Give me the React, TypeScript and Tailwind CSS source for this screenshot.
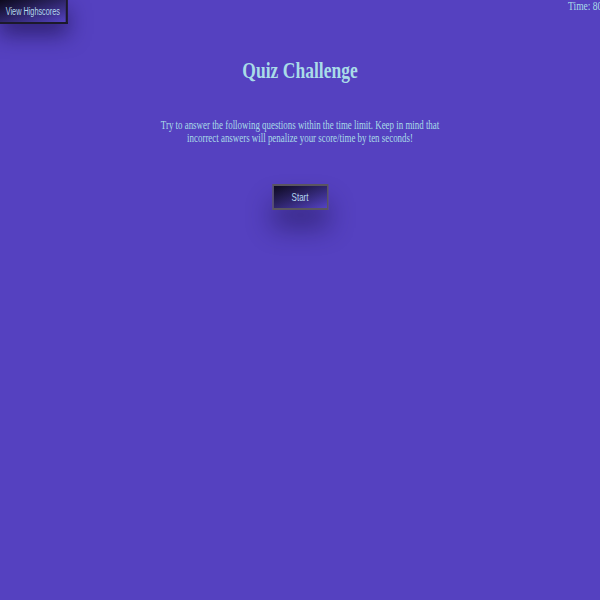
export default function App() {
	return (
		<div className="w-[600px] h-[600px] overflow-hidden bg-[#5541c0]">
			{/* page is laid out at 822px and squeezed to 600 like the reference */}
			<div className="w-[822px] h-[600px] origin-top-left scale-x-[0.73] text-[#a9dce8] font-['Liberation_Serif',serif]">
				<header className="flex justify-between items-start h-[24px]">
					<button className="w-[93px] h-[24px] border-r-[3px] border-b-2 border-[#1c1a2a] bg-gradient-to-br from-[#0d0a1e] to-[#5543c4] font-['Liberation_Sans',sans-serif] text-[10px] text-[#b5d8ee] shadow-[0_10px_25px_rgba(20,10,60,0.6)]">View Highscores</button>
					<p className="text-[13px] leading-[13px] -mr-[3px] -mt-[1px]">Time: 80</p>
				</header>
				<main className="flex flex-col items-center">
					<h1 className="mt-[34px] text-[24px] font-bold leading-[24px]">Quiz Challenge</h1>
					<p className="mt-[37px] w-[400px] text-center text-[12.2px] leading-[12.5px]">Try to answer the following questions within the time limit. Keep in mind that incorrect answers will penalize your score/time by ten seconds!</p>
					<button className="mt-[40px] w-[77px] h-[26px] border-2 border-[#5a5560] bg-gradient-to-br from-[#0e0a22] to-[#5543c4] font-['Liberation_Sans',sans-serif] text-[11px] text-[#b5d8ee] shadow-[0_18px_30px_rgba(20,10,60,0.45)]">Start</button>
				</main>
			</div>
		</div>
	)
}
